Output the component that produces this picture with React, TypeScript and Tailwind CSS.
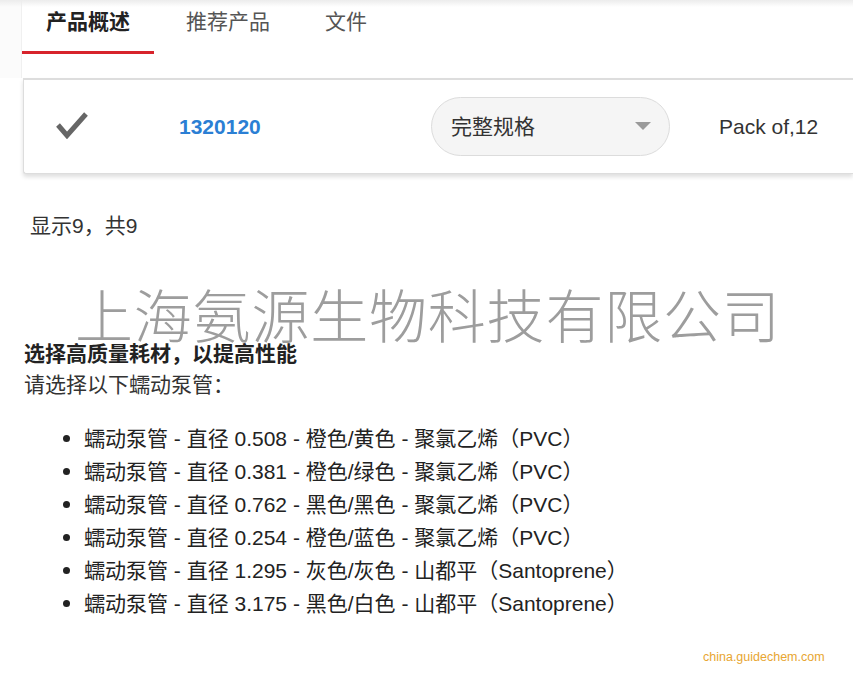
import React from "react";

const items = [
  "蠕动泵管 - 直径 0.508 - 橙色/黄色 - 聚氯乙烯（PVC）",
  "蠕动泵管 - 直径 0.381 - 橙色/绿色 - 聚氯乙烯（PVC）",
  "蠕动泵管 - 直径 0.762 - 黑色/黑色 - 聚氯乙烯（PVC）",
  "蠕动泵管 - 直径 0.254 - 橙色/蓝色 - 聚氯乙烯（PVC）",
  "蠕动泵管 - 直径 1.295 - 灰色/灰色 - 山都平（Santoprene）",
  "蠕动泵管 - 直径 3.175 - 黑色/白色 - 山都平（Santoprene）",
];

export default function App() {
  return (
    <div className="w-[853px] h-[676px] bg-white relative overflow-hidden font-['Liberation_Sans','Noto_Sans_CJK_SC',sans-serif] text-[#333]">
      {/* top band */}
      <div className="absolute left-0 top-0 w-full h-[7px] bg-gradient-to-b from-[#ececec] to-transparent pointer-events-none" />
      <div className="flex">
        <div className="w-[22px] h-[78px] bg-[#fbfbfb] border-r border-[#f0f0f0]" />
        <div className="flex-1 flex items-start h-[78px]">
          <div className="w-[132px] h-[54px] pt-[8px] border-b-[3px] border-[#d7232b] text-center text-[21px] leading-[28px] font-bold text-[#222]">
            产品概述
          </div>
          <div className="ml-[32px] pt-[8px] text-[21px] leading-[28px] text-[#555]">推荐产品</div>
          <div className="ml-[55px] pt-[8px] text-[21px] leading-[28px] text-[#555]">文件</div>
        </div>
      </div>

      {/* card */}
      <div className="ml-[23px] h-[96px] border border-r-0 border-t-2 border-[#dddddd] rounded-bl-[3px] shadow-[0_3px_4px_rgba(0,0,0,0.13)] flex items-center bg-white">
        <div className="pl-[32px] flex items-center -mt-[4px]">
          <svg width="33" height="28" viewBox="0 0 33 28">
            <polyline points="2,14 11,24.5 30,3" fill="none" stroke="#666666" strokeWidth="5" strokeLinejoin="miter" />
          </svg>
        </div>
        <div className="ml-[90px] w-[252px] text-[21px] font-bold text-[#2b7fd4]">1320120</div>
        <div className="w-[239px] h-[59px] rounded-full bg-[#f5f5f5] border border-[#dcdcdc] flex items-center pl-[19px] pr-[18px]">
          <span className="text-[21px] text-[#333] flex-1">完整规格</span>
          <svg width="16" height="9" viewBox="0 0 16 9">
            <polygon points="0,0 16,0 8,8" fill="#9a9a9a" />
          </svg>
        </div>
        <div className="ml-[49px] text-[21px] text-[#333]">Pack of,12</div>
      </div>

      <div className="ml-[30px] mt-[38px] text-[21px] leading-[28px] text-[#333]">显示9，共9</div>

      <div className="ml-[24px] mt-[98px] text-[21px] leading-[31px] text-[#222]">
        <div className="font-bold">选择高质量耗材，以提高性能</div>
        <div className="text-[#333]">请选择以下蠕动泵管：</div>
      </div>

      <ul className="mt-[22px]">
        {items.map((t) => (
          <li key={t} className="flex items-center h-[33px] text-[21px] text-[#222]">
            <span className="ml-[63px] w-[7px] h-[7px] rounded-full bg-[#222]" />
            <span className="ml-[14px]">{t}</span>
          </li>
        ))}
      </ul>

      {/* watermark */}
      <div className="absolute left-[75px] top-[285px] text-[58px] leading-[56px] tracking-[0.8px] font-light text-[#9d9d9d] font-['Noto_Sans_CJK_SC',sans-serif] whitespace-nowrap pointer-events-none">
        上海氨源生物科技有限公司
      </div>

      <div className="absolute left-[703px] top-[649px] text-[12.5px] leading-[16px] text-[#e8a631] whitespace-nowrap">
        china.guidechem.com
      </div>
    </div>
  );
}
